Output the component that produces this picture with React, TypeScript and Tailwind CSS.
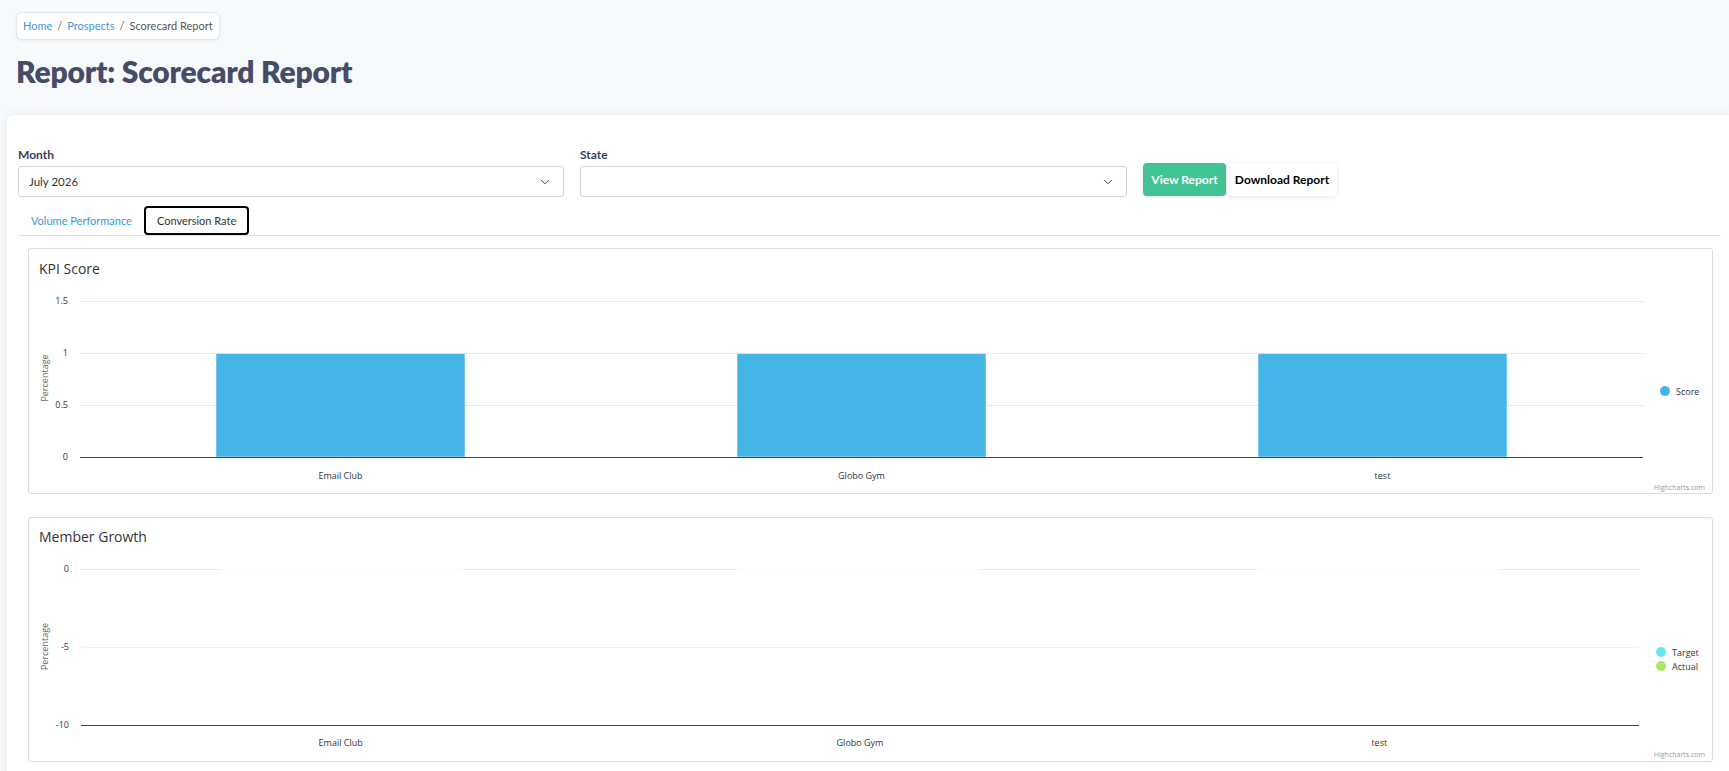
import React from "react";
import { ChevronDown } from "lucide-react";

const CF = "Open Sans, Noto Sans, sans-serif";

function Txt(props: {
  x: number;
  y: number;
  size?: number;
  anchor?: "start" | "middle" | "end";
  fill?: string;
  children: React.ReactNode;
  rotate?: boolean;
}) {
  const { x, y, size = 9, anchor = "start", fill = "#333333", children, rotate } = props;
  return (
    <text
      x={x}
      y={y}
      fontSize={size}
      fontFamily={CF}
      fill={fill}
      textAnchor={anchor}
      dominantBaseline="central"
      transform={rotate ? `rotate(-90 ${x} ${y})` : undefined}
    >
      {children}
    </text>
  );
}

function KpiChart() {
  const grid = [52, 104, 156];
  const labels = ["1.5", "1", "0.5", "0"];
  const bars = [187, 708, 1229];
  const cats = [
    { n: "Email Club", x: 311.5 },
    { n: "Globo Gym", x: 832.5 },
    { n: "test", x: 1353.5 },
  ];
  return (
    <svg width={1683} height={244} className="block">
      <Txt x={10} y={19} size={14} fill="#333333">
        KPI Score
      </Txt>
      {grid.map((y) => (
        <line key={y} x1={51} x2={1614} y1={y + 0.5} y2={y + 0.5} stroke="#e6e6e6" strokeWidth={1} />
      ))}
      {labels.map((l, i) => (
        <Txt key={l} x={39} y={51 + i * 52} anchor="end">
          {l}
        </Txt>
      ))}
      <Txt x={15} y={129} anchor="middle" rotate fill="#666666">
        Percentage
      </Txt>
      {bars.map((x) => (
        <rect key={x} x={x} y={104.5} width={249} height={103.5} fill="#45b4e6" stroke="#ffffff" strokeWidth={0.5} />
      ))}
      <line x1={51} x2={1614} y1={208.5} y2={208.5} stroke="#444444" strokeWidth={1} />
      {cats.map((c) => (
        <Txt key={c.n} x={c.x} y={226} anchor="middle">
          {c.n}
        </Txt>
      ))}
      <circle cx={1636} cy={142} r={5} fill="#45b4e6" />
      <Txt x={1647} y={142}>
        Score
      </Txt>
      <Txt x={1676} y={238} size={7} anchor="end" fill="#999999">
        Highcharts.com
      </Txt>
    </svg>
  );
}

function GrowthChart() {
  const labels = ["0", "-5", "-10"];
  const segs = [
    [52, 189],
    [434, 708],
    [952, 1228],
    [1473, 1610],
  ];
  const cats = [
    { n: "Email Club", x: 311.7 },
    { n: "Globo Gym", x: 831 },
    { n: "test", x: 1350.3 },
  ];
  return (
    <svg width={1683} height={243} className="block">
      <Txt x={10} y={18} size={14} fill="#333333">
        Member Growth
      </Txt>
      <line x1={52} x2={1610} y1={51.5} y2={51.5} stroke="#fafafa" strokeWidth={1} />
      {segs.map(([a, b]) => (
        <line key={a} x1={a} x2={b} y1={51.5} y2={51.5} stroke="#e6e6e6" strokeWidth={1} />
      ))}
      <line x1={52} x2={1610} y1={129.5} y2={129.5} stroke="#efefef" strokeWidth={1} />
      {labels.map((l, i) => (
        <Txt key={l} x={40} y={50 + i * 78} anchor="end">
          {l}
        </Txt>
      ))}
      <Txt x={15} y={128.5} anchor="middle" rotate fill="#666666">
        Percentage
      </Txt>
      <line x1={52} x2={1610} y1={207.5} y2={207.5} stroke="#444444" strokeWidth={1} />
      {cats.map((c) => (
        <Txt key={c.n} x={c.x} y={224} anchor="middle">
          {c.n}
        </Txt>
      ))}
      <circle cx={1632} cy={134} r={5} fill="#64e8f2" />
      <Txt x={1643} y={134}>
        Target
      </Txt>
      <circle cx={1632} cy={148} r={5} fill="#a6ea5e" />
      <Txt x={1643} y={148}>
        Actual
      </Txt>
      <Txt x={1676} y={236} size={7} anchor="end" fill="#999999">
        Highcharts.com
      </Txt>
    </svg>
  );
}

function Select({ value }: { value?: string }) {
  return (
    <div className="h-[31px] w-full bg-white border border-[#cfd4da] rounded-[3px] flex items-center justify-between pl-[10px] pr-[11px]">
      <span className="text-[11.5px] text-[#333]">{value ?? ""}</span>
      <ChevronDown size={14} strokeWidth={1.6} color="#333" />
    </div>
  );
}

export default function App() {
  return (
    <div className="h-[771px] w-full bg-[#f6fafc] font-['Lato','Noto_Sans',sans-serif] overflow-hidden">
      <div className="pl-[16px] pt-[12px]">
        <div className="inline-flex items-center h-[28px] px-[6px] bg-white border border-[#e2e7ee] rounded-[6px] shadow-[0_1px_3px_rgba(0,0,0,0.06)] text-[11px]">
          <span className="text-[#3d9ad6]">Home</span>
          <span className="text-[#666] px-[5px]">/</span>
          <span className="text-[#3d9ad6]">Prospects</span>
          <span className="text-[#666] px-[5px]">/</span>
          <span className="text-[#555]">Scorecard Report</span>
        </div>
        <h1 className="mt-[13px] text-[30px] leading-[36px] font-extrabold text-[#474c66] tracking-[-0.2px]">
          Report: Scorecard Report
        </h1>
      </div>

      <div className="ml-[7px] mt-[26px] bg-white rounded-tl-[6px] shadow-[0_0_10px_rgba(0,0,0,0.07)] pl-[11px] pt-[32px] h-[660px]">
        <div className="w-[1703px]">
          <div className="flex items-end gap-[16px]">
            <div className="w-[546px] flex flex-col gap-[4px]">
              <label className="text-[12px] leading-[15px] font-bold text-[#3a3f55]">Month</label>
              <Select value="July 2026" />
            </div>
            <div className="w-[547px] flex flex-col gap-[4px]">
              <label className="text-[12px] leading-[15px] font-bold text-[#3a3f55]">State</label>
              <Select />
            </div>
            <div className="flex items-center mb-[1px]">
              <button className="h-[33px] w-[83px] rounded-[4px] bg-[#42c393] text-white text-[12px] font-bold shadow-[0_1px_3px_rgba(0,0,0,0.12)]">
                View Report
              </button>
              <button className="ml-[1px] h-[33px] w-[110px] rounded-[4px] bg-white text-black text-[12px] font-bold shadow-[0_1px_4px_rgba(0,0,0,0.1)]">
                Download Report
              </button>
            </div>
          </div>

          <div className="mt-[9px] ml-[1px] flex border-b border-[#e3e3e3]">
            <div className="h-[29px] px-[12px] flex items-center text-[11px] text-[#3a97d4]">Volume Performance</div>
            <div className="h-[29px] -mb-px px-[11px] flex items-center text-[11px] text-[#333] border-2 border-black rounded-[4px]">
              Conversion Rate
            </div>
          </div>

          <div className="pl-[10px] pr-[8px] pt-[12px] flex flex-col gap-[23px]">
            <div className="border border-[#dcdcdc] rounded-[3px] overflow-hidden bg-white">
              <KpiChart />
            </div>
            <div className="border border-[#dcdcdc] rounded-[3px] overflow-hidden bg-white">
              <GrowthChart />
            </div>
          </div>
        </div>
      </div>
    </div>
  );
}
